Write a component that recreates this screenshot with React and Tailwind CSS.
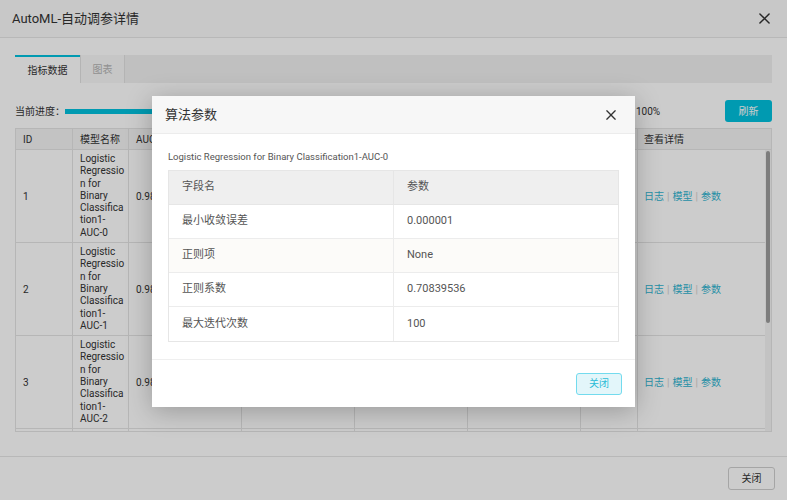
import React from "react";

const font = { fontFamily: "Roboto, 'Noto Sans CJK SC', sans-serif" };

function XIcon({ className }) {
  return (
    <svg viewBox="0 0 12 12" className={className} fill="none" stroke="currentColor" strokeWidth="1.6" strokeLinecap="round">
      <path d="M1 1 L11 11 M11 1 L1 11" />
    </svg>
  );
}

const cols = [58, 56, 113, 113, 113, 113, 57];
const rows = ["0", "1", "2", "3"];

function Links() {
  return (
    <div className="flex items-center gap-[3px] text-[#2fb4d0] text-[10px] whitespace-nowrap">
      <span>日志</span>
      <span className="text-[#cfcfcf]">|</span>
      <span>模型</span>
      <span className="text-[#cfcfcf]">|</span>
      <span>参数</span>
    </div>
  );
}

export default function App() {
  return (
    <div className="relative w-[787px] h-[500px] overflow-hidden bg-white text-[#333]" style={font}>
      {/* header */}
      <div className="h-[38px] bg-[#fafafa] border-b border-[#e6e6e6] flex items-center justify-between pl-[12px] pr-[17px]">
        <span className="text-[13px] text-[#333]">AutoML-自动调参详情</span>
        <XIcon className="w-[11px] h-[11px] text-[#333]" />
      </div>

      {/* main */}
      <div className="h-[418px] px-[15px] pt-[17px] flex flex-col">
        {/* tabs */}
        <div className="h-[28px] bg-[#f1f1f1] flex shrink-0">
          <div className="w-[65px] bg-white border-t-2 border-[#00c1de] flex items-center justify-center text-[10px] text-[#333]">指标数据</div>
          <div className="w-[45px] bg-[#f8f8f8] border-x border-[#e2e2e2] flex items-center justify-center text-[10px] text-[#b5b5b5]">图表</div>
        </div>

        {/* progress */}
        <div className="mt-[17px] h-[22px] flex items-center shrink-0">
          <span className="text-[10px] text-[#333] whitespace-nowrap">当前进度：</span>
          <div className="flex-1 flex items-center">
            <div className="h-[5px] w-[568px] bg-[#00c1de]" />
            <span className="ml-[3px] text-[10px] text-[#333]">100%</span>
          </div>
          <div className="w-[47px] h-[22px] rounded-[3px] bg-[#00c1de] text-white text-[10px] flex items-center justify-center">刷新</div>
        </div>

        {/* table */}
        <div className="mt-[6px] border border-[#e4e4e4] h-[304px] flex flex-col overflow-hidden shrink-0">
          <div className="h-[21px] bg-[#f4f4f4] flex text-[10px] text-[#333] border-b border-[#e4e4e4] shrink-0">
            {["ID", "模型名称", "AUC", "F1-Score", "准确率", "召回率", "状态"].map((h, i) => (
              <div key={h} className="border-r border-[#e4e4e4] flex items-center px-[7px] shrink-0 whitespace-nowrap overflow-hidden" style={{ width: cols[i] - (i === 0 ? 1 : 0) }}>{h}</div>
            ))}
            <div className="flex-1 flex items-center px-[6px] whitespace-nowrap">查看详情</div>
          </div>
          <div className="flex-1 flex overflow-hidden">
            <div className="flex-1 flex flex-col">
              {rows.map((r) => (
                <div key={r} className="flex border-b border-[#e4e4e4] text-[10px] text-[#333] shrink-0">
                  <div className="border-r border-[#e4e4e4] flex items-center px-[7px] shrink-0" style={{ width: cols[0] - 1 }}>{Number(r) + 1}</div>
                  <div className="border-r border-[#e4e4e4] pl-[7px] pr-[1px] py-[3px] leading-[12.3px] whitespace-pre-line shrink-0" style={{ width: cols[1] }}>
                    {`Logistic\nRegressio\nn for\nBinary\nClassifica\ntion1-\nAUC-${r}`}
                  </div>
                  <div className="border-r border-[#e4e4e4] flex items-center px-[7px] shrink-0" style={{ width: cols[2] }}>0.98</div>
                  <div className="border-r border-[#e4e4e4] flex items-center px-[7px] shrink-0" style={{ width: cols[3] }}>0.95</div>
                  <div className="border-r border-[#e4e4e4] flex items-center px-[7px] shrink-0" style={{ width: cols[4] }}>0.94</div>
                  <div className="border-r border-[#e4e4e4] flex items-center px-[7px] shrink-0" style={{ width: cols[5] }}>0.93</div>
                  <div className="border-r border-[#e4e4e4] flex items-center px-[7px] shrink-0" style={{ width: cols[6] }}>成功</div>
                  <div className="flex-1 flex items-center px-[6px]"><Links /></div>
                </div>
              ))}
            </div>
            <div className="w-[6px] bg-[#f4f4f4] flex flex-col">
              <div className="h-[172px] mx-[1px] mt-[1px] rounded-[2px] bg-[#9d9d9d]" />
            </div>
          </div>
        </div>
      </div>

      {/* footer */}
      <div className="h-[44px] border-t border-[#e6e6e6] flex items-center justify-end pr-[12px]">
        <div className="w-[47px] h-[23px] rounded-[3px] border border-[#cfcfcf] bg-white text-[10px] text-[#333] flex items-center justify-center">关闭</div>
      </div>

      {/* mask */}
      <div className="absolute inset-0 bg-black/20" />

      {/* modal */}
      <div className="absolute left-[152px] top-[96px] w-[483px] h-[311px] bg-white shadow-[0_4px_24px_rgba(0,0,0,0.25)] flex flex-col">
        <div className="h-[38px] bg-[#f7f7f7] border-b border-[#ececec] flex items-center justify-between pl-[13px] pr-[19px] shrink-0">
          <span className="text-[13px] text-[#333]">算法参数</span>
          <XIcon className="w-[10px] h-[10px] text-[#333]" />
        </div>
        <div className="px-[16px] pt-[16px] pb-[17px] shrink-0">
          <div className="text-[9.5px] text-[#555] leading-[13px] mb-[7px]">Logistic Regression for Binary Classification1-AUC-0</div>
          <div className="border border-[#e6e6e6] text-[11px] text-[#555]">
            <div className="h-[34px] bg-[#efefef] flex border-b border-[#e6e6e6]">
              <div className="w-[225px] border-r border-[#e6e6e6] flex items-center pl-[13px]">字段名</div>
              <div className="flex-1 flex items-center pl-[13px]">参数</div>
            </div>
            {[
              ["最小收敛误差", "0.000001", "bg-white"],
              ["正则项", "None", "bg-[#fcfbf9]"],
              ["正则系数", "0.70839536", "bg-white"],
              ["最大迭代次数", "100", "bg-white"],
            ].map(([k, v, bg], i) => (
              <div key={k} className={`h-[34px] flex ${bg} ${i < 3 ? "border-b border-[#ececec]" : ""}`}>
                <div className="w-[225px] border-r border-[#ececec] flex items-center pl-[13px]">{k}</div>
                <div className="flex-1 flex items-center pl-[13px]">{v}</div>
              </div>
            ))}
          </div>
        </div>
        <div className="flex-1 border-t border-[#efefef] flex items-center justify-end pr-[13px]">
          <div className="w-[46px] h-[22px] rounded-[3px] border border-[#73dbee] bg-[#e3f6fa] text-[10px] text-[#2cbcd7] flex items-center justify-center">关闭</div>
        </div>
      </div>
    </div>
  );
}
